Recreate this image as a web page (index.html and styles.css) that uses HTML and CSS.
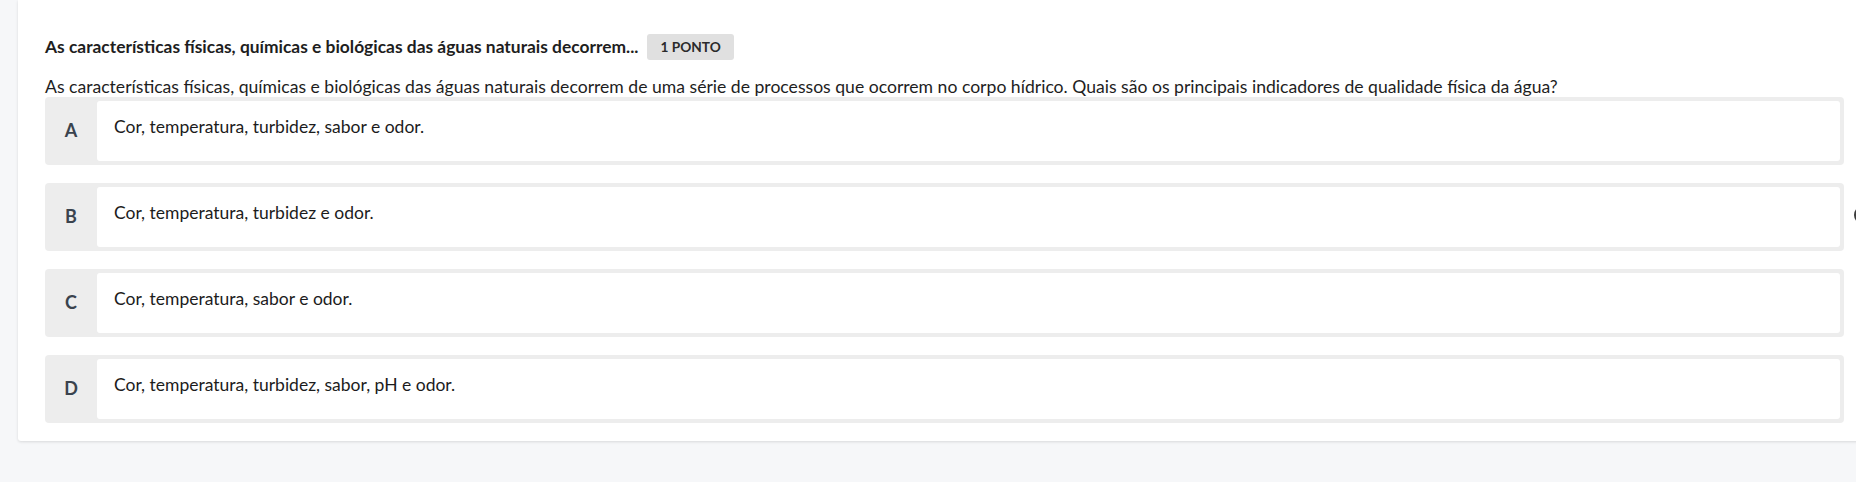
FILE: index.html
```html
<!DOCTYPE html>
<html lang="pt-BR">
<head>
<meta charset="utf-8">
<title>Questão</title>
<link rel="stylesheet" href="styles.css">
</head>
<body>
<div class="page">
  <section class="card">
    <div class="title-row">
      <h2 class="title">As características físicas, químicas e biológicas das águas naturais decorrem...</h2>
      <span class="badge">1 PONTO</span>
    </div>
    <p class="question">As características físicas, químicas e biológicas das águas naturais decorrem de uma série de processos que ocorrem no corpo hídrico. Quais são os principais indicadores de qualidade física da água?</p>
    <div class="options">
      <div class="option">
        <span class="letter">A</span>
        <div class="answer">Cor, temperatura, turbidez, sabor e odor.</div>
      </div>
      <div class="option">
        <span class="letter">B</span>
        <div class="answer">Cor, temperatura, turbidez e odor.</div>
        <span class="edge-ring"></span>
      </div>
      <div class="option">
        <span class="letter">C</span>
        <div class="answer">Cor, temperatura, sabor e odor.</div>
      </div>
      <div class="option">
        <span class="letter">D</span>
        <div class="answer">Cor, temperatura, turbidez, sabor, pH e odor.</div>
      </div>
    </div>
  </section>
</div>
</body>
</html>
```

FILE: styles.css
```css
html, body {
  margin: 0;
  padding: 0;
  overflow: hidden;
}

body {
  background: #f6f7f9;
  font-family: Lato, "Noto Sans", "Liberation Sans", sans-serif;
  color: #1c1c1c;
  width: 1856px;
  height: 482px;
}

.page {
  padding-left: 18px;
}

.card {
  background: #ffffff;
  width: 1799px;
  padding: 34px 27px 18px 27px;
  border-radius: 0 0 3px 3px;
  box-shadow: 0 1px 3px rgba(0, 0, 0, 0.12);
}

.title-row {
  display: flex;
  align-items: center;
  gap: 9px;
  height: 25px;
}

.title {
  margin: 0;
  font-size: 17.4px;
  font-weight: 700;
  line-height: 24px;
  color: #1e1e1e;
}

.badge {
  display: inline-flex;
  align-items: center;
  height: 26px;
  padding: 0 13px;
  background: #e0e0e0;
  border-radius: 3px;
  font-size: 13.7px;
  font-weight: 700;
  color: #2b2b2b;
}

.question {
  margin: 18px 0 0 0;
  font-size: 17.6px;
  line-height: 20px;
  color: #1e1e1e;
}

.options {
  display: flex;
  flex-direction: column;
  gap: 18px;
}

.option {
  position: relative;
  display: flex;
  height: 68px;
  box-sizing: border-box;
  padding: 4px 4px 4px 0;
  background: #ededed;
  border-radius: 4px;
}

.letter {
  width: 52px;
  flex: none;
  display: flex;
  align-items: center;
  justify-content: center;
  font-size: 18px;
  font-weight: 700;
  color: #3a434e;
  padding-bottom: 2px;
}

.answer {
  flex: 1;
  background: #ffffff;
  border-radius: 3px;
  padding: 14px 17px 0 17px;
  font-size: 17.5px;
  line-height: 24px;
  color: #1c1c1c;
}

.edge-ring {
  position: absolute;
  left: 1809px;
  top: 23px;
  width: 14px;
  height: 14px;
  border: 2px solid #3c3c3c;
  border-radius: 50%;
}
```
